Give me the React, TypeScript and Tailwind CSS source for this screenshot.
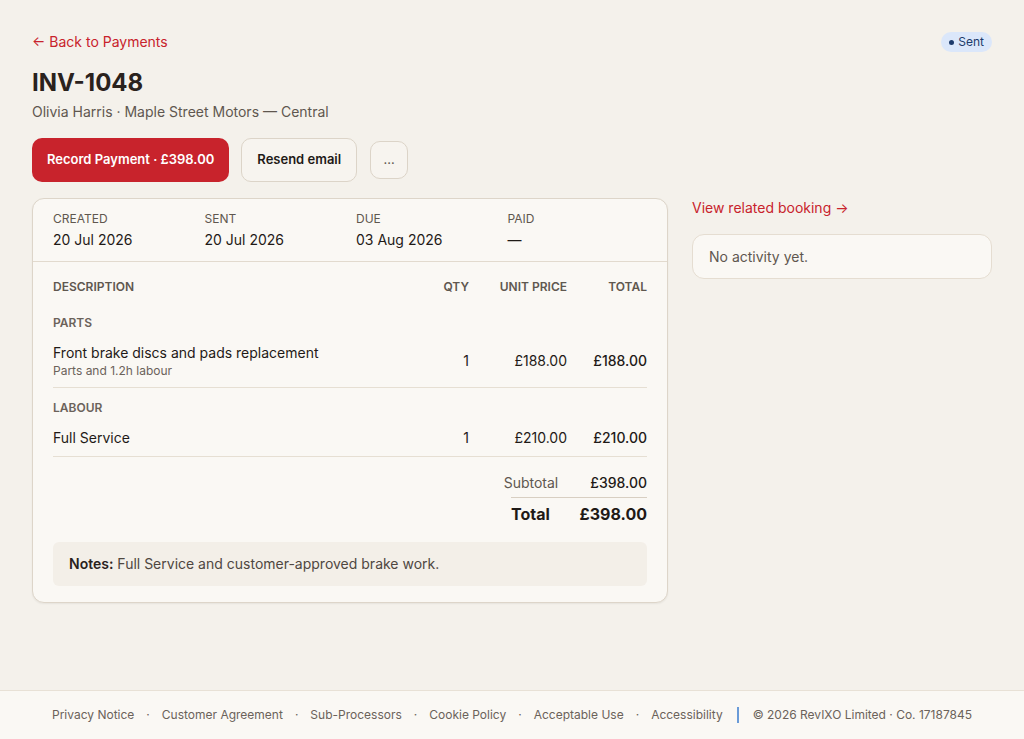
const items = [
  {
    group: 'Parts',
    rows: [
      { name: 'Front brake discs and pads replacement', note: 'Parts and 1.2h labour', qty: 1, unit: '£188.00', total: '£188.00' },
    ],
  },
  {
    group: 'Labour',
    rows: [{ name: 'Full Service', note: '', qty: 1, unit: '£210.00', total: '£210.00' }],
  },
];

const meta = [
  { label: 'Created', value: '20 Jul 2026' },
  { label: 'Sent', value: '20 Jul 2026' },
  { label: 'Due', value: '03 Aug 2026' },
  { label: 'Paid', value: '—' },
];

const footerLinks = ['Privacy Notice', 'Customer Agreement', 'Sub-Processors', 'Cookie Policy', 'Acceptable Use', 'Accessibility'];

export default function App() {
  return (
    <div className="min-h-screen flex flex-col bg-[#f4f1eb] text-[#1f1a17] font-['Inter',sans-serif]">
      <main className="flex-1 px-8 pt-8">
        <div className="flex items-center justify-between">
          <a className="text-sm text-[#c8232c] leading-5">← Back to Payments</a>
          <span className="flex items-center gap-1 rounded-full bg-[#dbe7fa] px-2 h-5 text-xs text-[#1d3b6b]">
            <span className="w-[5px] h-[5px] rounded-full bg-[#1d3b6b]" />
            Sent
          </span>
        </div>

        <h1 className="mt-[15px] text-[24px] leading-8 font-bold text-[#2a221d]">INV-1048</h1>
        <p className="mt-[3px] text-sm leading-5 text-[#5f574f]">Olivia Harris · Maple Street Motors — Central</p>

        <div className="mt-4 flex items-center gap-3">
          <button className="h-11 px-[15px] rounded-[10px] bg-[#c8232c] text-white text-[13px] font-semibold">
            Record Payment · £398.00
          </button>
          <button className="h-11 px-[15px] rounded-[10px] border border-[#dcd4c8] bg-[#f7f4ef] text-[13px] font-semibold text-[#1f1a17]">
            Resend email
          </button>
          <button className="h-[38px] w-[38px] ml-px rounded-[10px] border border-[#dcd4c8] bg-[#f7f4ef] text-[13px] text-[#5f574f]">
            ...
          </button>
        </div>

        <div className="mt-4 grid grid-cols-[1fr_300px] gap-6 items-start">
          <div className="rounded-xl border border-[#ddd5c9] bg-[#faf8f4] shadow-[0_1px_2px_rgba(0,0,0,0.06)]">
            <div className="grid grid-cols-4 gap-3 px-5 pt-3 pb-[11px] border-b border-[#e2dace]">
              {meta.map((m) => (
                <div key={m.label}>
                  <div className="text-xs leading-4 uppercase text-[#5f574f]">{m.label}</div>
                  <div className="mt-[3px] text-sm leading-5">{m.value}</div>
                </div>
              ))}
            </div>

            <div className="px-5 pt-[17px] pb-4">
              <div className="grid grid-cols-[1fr_60px_98px_80px] text-xs leading-4 font-semibold uppercase text-[#5f574f]">
                <span>Description</span>
                <span className="text-right">Qty</span>
                <span className="text-right">Unit price</span>
                <span className="text-right">Total</span>
              </div>
              <div className="mt-2">
                {items.map((g) => (
                  <div key={g.group}>
                    <div className="pt-3 text-xs leading-4 font-semibold uppercase text-[#6b625a]">{g.group}</div>
                    {g.rows.map((r) => (
                      <div
                        key={r.name}
                        className="grid grid-cols-[1fr_60px_98px_80px] items-center pt-3 pb-2 border-b border-[#e6dfd3] text-sm"
                      >
                        <div>
                          <div className="leading-5">{r.name}</div>
                          {r.note && <div className="text-xs leading-4 text-[#6b625a]">{r.note}</div>}
                        </div>
                        <span className="text-right">{r.qty}</span>
                        <span className="text-right">{r.unit}</span>
                        <span className="text-right font-medium">{r.total}</span>
                      </div>
                    ))}
                  </div>
                ))}
              </div>

              <div className="pt-4 flex flex-col items-end">
                <div className="flex items-center gap-8 pb-[4px] text-sm leading-5">
                  <span className="text-[#5f574f]">Subtotal</span>
                  <span className="font-medium">£398.00</span>
                </div>
                <div className="w-[136px] flex items-center justify-between border-t border-[#d8cfc2] pt-[4px] text-base leading-6 font-bold">
                  <span>Total</span>
                  <span>£398.00</span>
                </div>
              </div>

              <div className="mt-4 rounded-md bg-[#f3efe8] px-4 py-3 text-sm leading-5 text-[#4f4741]">
                <span className="font-semibold text-[#2a221d]">Notes:</span> Full Service and customer-approved brake work.
              </div>
            </div>
          </div>

          <div>
            <a className="block text-sm leading-5 text-[#c8232c]">View related booking →</a>
            <div className="mt-4 rounded-xl border border-[#e5ddd1] bg-[#faf8f4] px-4 h-[45px] flex items-center text-sm text-[#5f574f]">
              No activity yet.
            </div>
          </div>
        </div>
      </main>

      <footer className="h-[49px] border-t border-[#e8e1d6] bg-[#faf8f4] flex items-center justify-center text-xs text-[#6b625a]">
        {footerLinks.map((l, i) => (
          <span key={l} className="flex items-center">
            {i > 0 && <span className="mx-3">·</span>}
            <a>{l}</a>
          </span>
        ))}
        <span className="mx-[14px] w-[2px] h-4 bg-[#6a9bd8]" />
        <span>© 2026 RevIXO Limited · Co. 17187845</span>
      </footer>
    </div>
  );
}
